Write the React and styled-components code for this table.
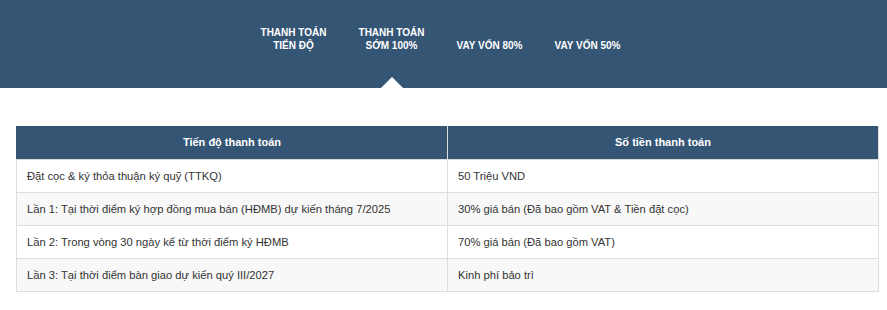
import React from "react";
import styled, { createGlobalStyle } from "styled-components";

const GlobalStyle = createGlobalStyle`
    body {
        margin: 0;
        background: #fff;
        font-family: "Liberation Sans", Arial, sans-serif;
    }
`;

const Band = styled.div`
    height: 88px;
    background-color: #355575;
    display: flex;
    justify-content: center;
    align-items: flex-end;
    padding-right: 6px;
    box-sizing: border-box;
`;

const TabList = styled.div`
    display: flex;
    align-items: flex-end;
    padding-bottom: 36px;
`;

const Tab = styled.div`
    position: relative;
    width: 98px;
    text-align: center;
    color: #fff;
    font-size: 10px;
    font-weight: bold;
    line-height: 13px;
    text-transform: uppercase;
    cursor: pointer;

    &::after {
        content: "";
        display: ${(p) => (p.$active ? "block" : "none")};
        position: absolute;
        left: 50%;
        bottom: -36px;
        margin-left: -11px;
        border-left: 11px solid transparent;
        border-right: 11px solid transparent;
        border-bottom: 11px solid #fff;
    }
`;

const Content = styled.div`
    padding: 38px 8px 0 16px;
`;

const Table = styled.table`
    width: 100%;
    border-collapse: collapse;
    table-layout: fixed;
    font-size: 11px;
`;

const HeadCell = styled.th`
    height: 33px;
    padding: 0 10px;
    background-color: #355575;
    color: #fff;
    font-weight: bold;
    text-align: center;
    border: 1px solid #ddd;
    border-top: none;
    border-left-color: #355575;
    box-sizing: border-box;
`;

const Row = styled.tr`
    background-color: ${(p) => (p.$odd ? "#f8f8f8" : "#fff")};
`;

const Cell = styled.td`
    height: 33px;
    padding: 0 10px;
    color: #333;
    font-size: 11.2px;
    border: 1px solid #ddd;
    box-sizing: border-box;
`;

const tabs = [
    ["Thanh toán", "tiến độ"],
    ["Thanh toán", "sớm 100%"],
    ["Vay vốn 80%"],
    ["Vay vốn 50%"],
];

const rows = [
    ["Đặt cọc & ký thỏa thuận ký quỹ (TTKQ)", "50 Triệu VND"],
    ["Lần 1: Tại thời điểm ký hợp đồng mua bán (HĐMB) dự kiến tháng 7/2025", "30% giá bán (Đã bao gồm VAT & Tiền đặt cọc)"],
    ["Lần 2: Trong vòng 30 ngày kể từ thời điểm ký HĐMB", "70% giá bán (Đã bao gồm VAT)"],
    ["Lần 3: Tại thời điểm bàn giao dự kiến quý III/2027", "Kinh phí bảo trì"],
];

function App() {
    return (
        <>
            <GlobalStyle />
            <Band>
                <TabList>
                    {tabs.map((t, i) => (
                        <Tab key={i} $active={i === 1}>
                            {t.map((line, j) => (
                                <div key={j}>{line}</div>
                            ))}
                        </Tab>
                    ))}
                </TabList>
            </Band>
            <Content>
                <Table>
                    <thead>
                        <tr>
                            <HeadCell>Tiến độ thanh toán</HeadCell>
                            <HeadCell>Số tiền thanh toán</HeadCell>
                        </tr>
                    </thead>
                    <tbody>
                        {rows.map((r, i) => (
                            <Row key={i} $odd={i % 2 === 1}>
                                <Cell>{r[0]}</Cell>
                                <Cell>{r[1]}</Cell>
                            </Row>
                        ))}
                    </tbody>
                </Table>
            </Content>
        </>
    );
}

export default App;
